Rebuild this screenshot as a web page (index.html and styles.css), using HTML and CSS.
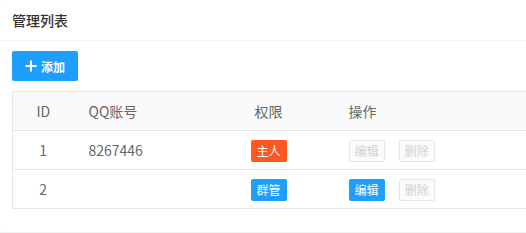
FILE: index.html
```html
<!DOCTYPE html>
<html lang="zh-CN">
<head>
    <meta charset="UTF-8">
    <title>管理列表</title>
    <link rel="stylesheet" href="styles.css">
</head>
<body>
    <div class="card">
        <div class="card-header">管理列表</div>
        <div class="card-body">
            <button class="btn btn-add" type="button">
                <svg width="12" height="12" viewBox="0 0 12 12"><path d="M6 0.5v11M0.5 6h11" stroke="#fff" stroke-width="2"/></svg>
                <span>添加</span>
            </button>
            <table class="admin-table">
                <colgroup>
                    <col style="width:61px">
                    <col style="width:130px">
                    <col style="width:130px">
                    <col>
                </colgroup>
                <thead>
                    <tr>
                        <th class="center">ID</th>
                        <th>QQ账号</th>
                        <th class="center">权限</th>
                        <th>操作</th>
                    </tr>
                </thead>
                <tbody>
                    <tr>
                        <td class="center">1</td>
                        <td>8267446</td>
                        <td class="center"><span class="tag tag-owner">主人</span></td>
                        <td>
                            <span class="btn-xs disabled">编辑</span>
                            <span class="btn-xs disabled">删除</span>
                        </td>
                    </tr>
                    <tr>
                        <td class="center">2</td>
                        <td></td>
                        <td class="center"><span class="tag tag-admin">群管</span></td>
                        <td>
                            <span class="btn-xs primary">编辑</span>
                            <span class="btn-xs disabled">删除</span>
                        </td>
                    </tr>
                </tbody>
            </table>
        </div>
    </div>
</body>
</html>
```

FILE: styles.css
```css
html, body {
    margin: 0;
    padding: 0;
    background: #f2f2f2;
    overflow: hidden;
}
body {
    font-family: "Noto Sans CJK SC", "Noto Sans", sans-serif;
    font-size: 14px;
    color: #666;
}
.card {
    width: 560px;
    height: 232px;
    background: #fff;
    border-radius: 2px;
    box-shadow: 0 1px 1px 0 rgba(0, 0, 0, 0.08);
}
.card-header {
    height: 40px;
    line-height: 40px;
    padding: 0 12px;
    border-bottom: 1px solid #f0f0f0;
    color: #333;
    font-size: 14px;
    font-weight: 500;
}
.card-body {
    padding: 10px 12px;
}
.btn {
    display: flex;
    align-items: center;
    justify-content: center;
    gap: 4px;
    border: none;
    border-radius: 2px;
    cursor: pointer;
    font-family: inherit;
}
.btn-add {
    width: 66px;
    height: 30px;
    padding: 0;
    background: #1E9FFF;
    color: #fff;
    font-size: 12px;
    font-weight: bold;
}
.admin-table {
    margin-top: 10px;
    width: 100%;
    border-collapse: collapse;
    table-layout: fixed;
}
.admin-table tr {
    height: 39px;
}
.admin-table th,
.admin-table td {
    height: 20px;
    line-height: 20px;
    padding: 0 15px;
    border: 1px solid #e6e6e6;
    border-left: none;
    border-right: none;
    text-align: left;
    font-weight: normal;
    color: #666;
    white-space: nowrap;
}
.admin-table th:first-child,
.admin-table td:first-child {
    border-left: 1px solid #e6e6e6;
}
.admin-table thead tr {
    background: #fafafa;
}
.admin-table .center {
    text-align: center;
}
.tag,
.btn-xs {
    display: inline-block;
    height: 22px;
    line-height: 20px;
    margin: -1px 0;
    padding: 0 5px;
    font-size: 12px;
    border: 1px solid transparent;
    border-radius: 2px;
    vertical-align: middle;
    box-sizing: border-box;
    width: 36px;
    text-align: center;
}
.tag-owner {
    background: #FF5722;
    color: #fff;
}
.tag-admin {
    background: #1E9FFF;
    color: #fff;
}
.btn-xs + .btn-xs {
    margin-left: 11px;
}
.btn-xs.primary {
    background: #1E9FFF;
    color: #fff;
}
.btn-xs.disabled {
    background: #fbfbfb;
    border-color: #e6e6e6;
    color: #d2d2d2;
}
```
